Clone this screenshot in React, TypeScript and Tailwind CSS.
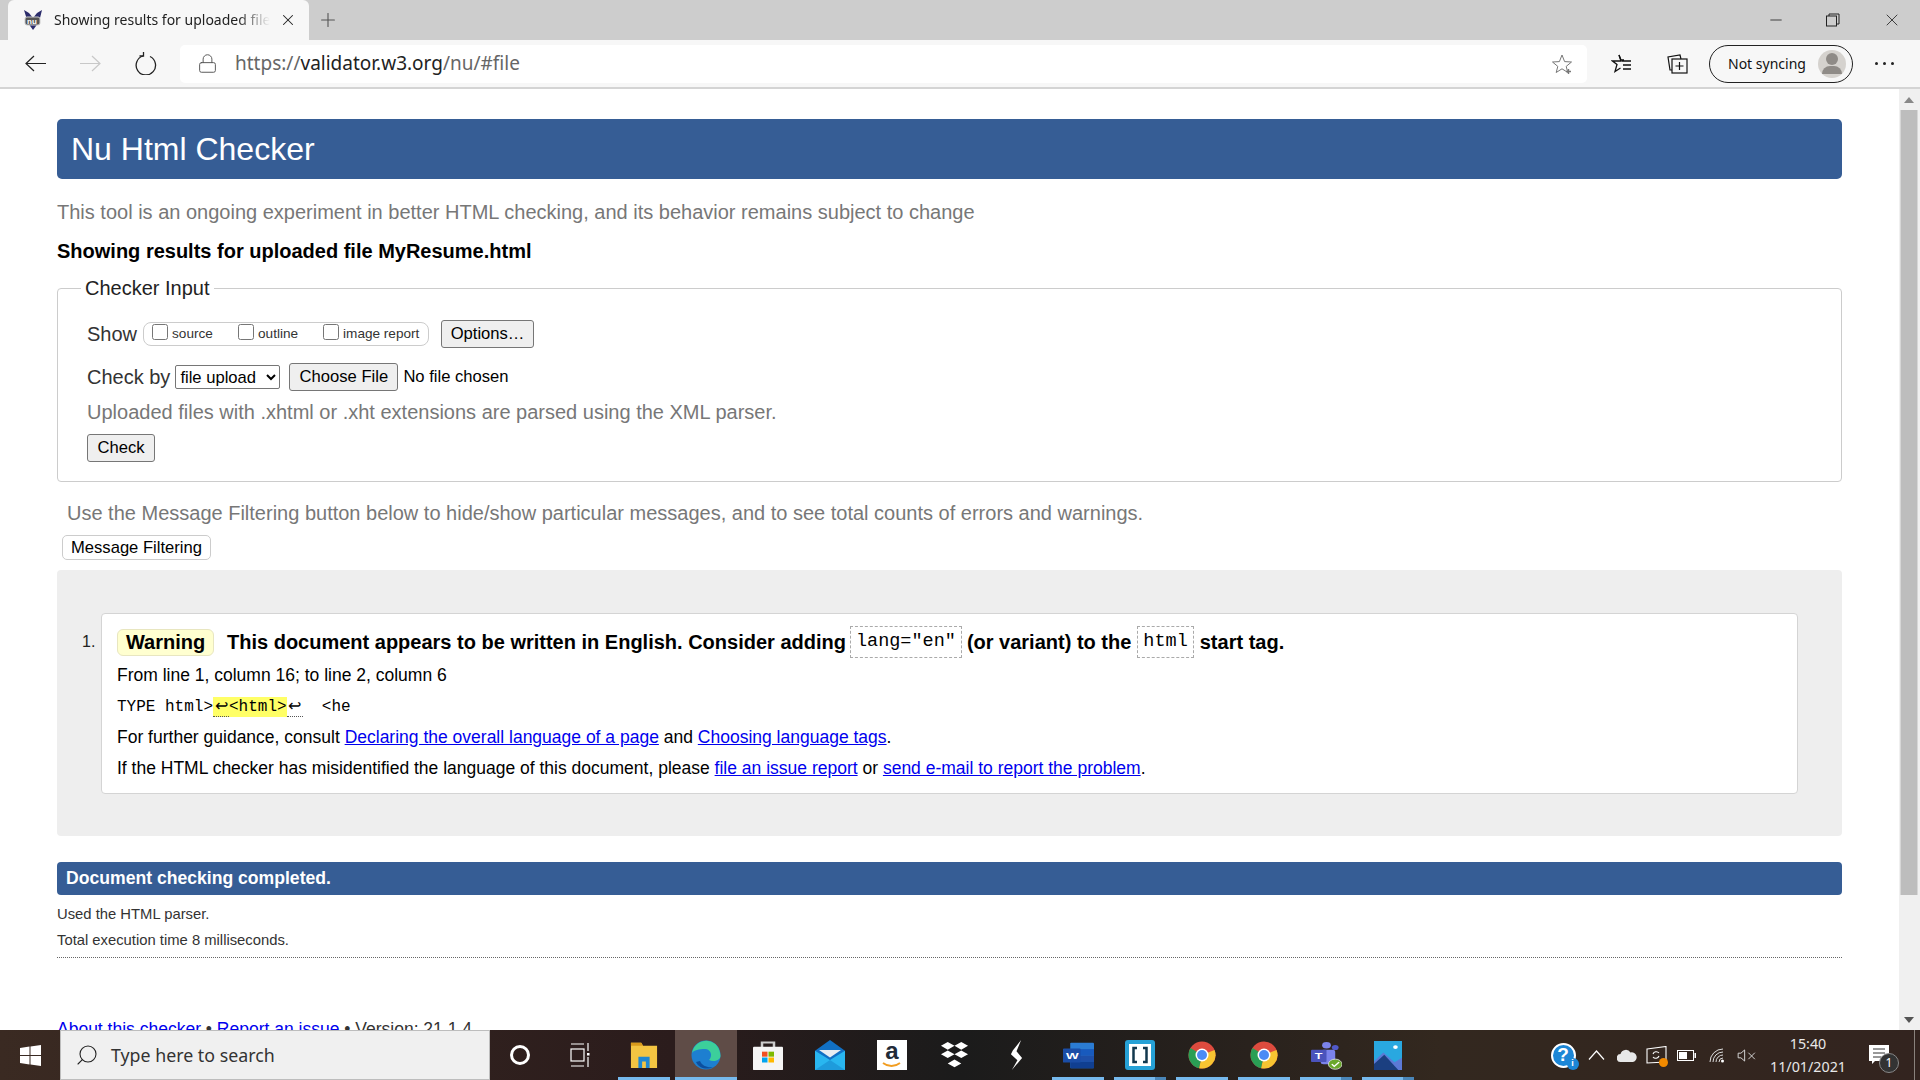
import React from 'react';
import { Lock, Plus, X, Minus, Search } from 'lucide-react';

const sans = "font-['Liberation_Sans',Arial,sans-serif]";
const ui = "font-['Noto_Sans','Open_Sans',sans-serif]";
const mono = "font-['Liberation_Mono',monospace]";
const btn = 'rounded-[3px] border border-[#767676] bg-[#efefef] text-black';
const link = 'text-[#0000ee] underline';

const NuLogo = () => (
  <svg width="22" height="22" viewBox="0 0 22 22">
    <path d="M2 1 L7 4 L11 9 L15 4 L20 1 L17 13 L11 21 L6 14 Z" fill="#2b2c6b" />
    <rect x="3" y="8" width="15" height="8" rx="2" fill="#555" stroke="#ccc" />
    <text x="5" y="15" fontSize="8" fontWeight="700" fill="#fff" fontFamily="Liberation Sans">nu</text>
  </svg>
);

const Tab = () => (
  <div className="flex h-10 items-center bg-[#cdcdcd] pl-[8px]">
    <div className="flex h-10 w-[301px] items-center rounded-t-[6px] bg-[#f7f7f7] pl-[14px]">
      <NuLogo />
      <span className={`ml-[10px] -mt-[2px] w-[216px] overflow-hidden whitespace-nowrap text-[14px] text-[#222] [mask-image:linear-gradient(to_right,black_85%,transparent)] ${ui}`}>
        Showing results for uploaded file MyResume.html
      </span>
      <X className="ml-[9px] text-[#222]" size={18} strokeWidth={1.4} />
    </div>
    <Plus className="ml-[8px] text-[#555]" size={22} strokeWidth={1.2} />
    <div className="flex-1" />
    <Minus className="mr-[41px] text-[#222]" size={18} strokeWidth={1.1} />
    <svg width="14" height="14" viewBox="0 0 14 14" fill="none" stroke="#222" className="mr-[42px]">
      <rect x="0.5" y="3" width="10" height="10" />
      <path d="M3 3 V1 H13 V11 H10.5" />
    </svg>
    <X className="mr-[18px] text-[#222]" size={20} strokeWidth={1} />
  </div>
);

const Toolbar = () => (
  <div className="flex h-[49px] items-center border-b-[2px] border-[#d4d4d4] bg-[#f7f7f7] pl-[8px]">
    <div className="flex w-[55px] justify-center">
      <svg width="21" height="17" viewBox="0 0 21 17" fill="none" stroke="#222" strokeWidth="1.2">
        <path d="M21 8.5 H1 M9 1 L1 8.5 L9 16" />
      </svg>
    </div>
    <div className="flex w-[55px] justify-center">
      <svg width="21" height="17" viewBox="0 0 21 17" fill="none" stroke="#c8c8c8" strokeWidth="1.2">
        <path d="M0 8.5 H20 M12 1 L20 8.5 L12 16" />
      </svg>
    </div>
    <div className="flex w-[55px] justify-center">
      <svg width="22" height="23" viewBox="0 0 22 23" fill="none" stroke="#222" strokeWidth="1.3">
        <path d="M8 4 A9.7 9.7 0 1 0 15 4.5" />
        <path d="M8.5 0 V4 H4.5" />
      </svg>
    </div>
    <div className="ml-[7px] flex h-[38px] w-[1407px] items-center rounded-[5px] bg-white">
      <Lock className="ml-[17px] text-[#555]" size={21} strokeWidth={1.1} />
      <span className={`ml-[17px] text-[19px] text-[#666] ${ui}`}>
        https://<span className="text-[#222]">validator.w3.org</span>/nu/#file
      </span>
      <div className="flex-1" />
      <svg width="22" height="22" viewBox="0 0 22 22" fill="none" stroke="#777" className="mr-[14px]">
        <path d="M11 2 L13.6 8.6 L20.5 9 L15.2 13.4 L16.8 19.5 L11 15.8 L5.2 19.5 L6.8 13.4 L1.5 9 L8.4 8.6 Z" />
        <path d="M17.5 16 V21 M15 18.5 H20" strokeWidth="1.4" />
      </svg>
    </div>
    <svg width="22" height="22" viewBox="0 0 22 22" fill="none" stroke="#111" className="ml-[24px]" strokeWidth="1.3">
      <path d="M8 2 L10 8 H1.5 L6 11.5 L4 18.5 L9.5 15" />
      <path d="M8 2 L10 7 H13 M11 8 H20 M12 12 H20 M12 16 H20" />
    </svg>
    <svg width="22" height="22" viewBox="0 0 22 22" fill="none" stroke="#111" className="ml-[33px]" strokeWidth="1.2">
      <rect x="6" y="6" width="15" height="14" />
      <path d="M6 17 H4 L2 4 L14 2 L15 6" />
      <path d="M13.5 9 V17 M9.5 13 H17.5" />
    </svg>
    <div className={`ml-[21px] flex h-[38px] w-[144px] items-center rounded-full border-[1.5px] border-[#222] pl-[18px] text-[14px] text-[#111] ${ui}`}>
      Not syncing
      <span className="ml-[12px] flex h-7 w-7 flex-col items-center justify-center rounded-full bg-[#d5d2ce]">
        <span className="h-[12px] w-[12px] rounded-full bg-[#8f8b87]" />
        <span className="mt-[1px] h-[8px] w-[20px] rounded-t-full bg-[#8f8b87]" />
      </span>
    </div>
    <div className="ml-[22px] flex gap-[5px]">
      <span className="h-[3px] w-[3px] rounded-full bg-[#222]" />
      <span className="h-[3px] w-[3px] rounded-full bg-[#222]" />
      <span className="h-[3px] w-[3px] rounded-full bg-[#222]" />
    </div>
  </div>
);

const Page = () => (
  <div className={`h-full flex-1 overflow-hidden pl-[57px] pr-[57px] pt-[30px] text-black ${sans}`}>
    <h1 className="flex h-[60px] items-center rounded-[5px] bg-[#365d95] pl-[14px] text-[32px] text-white">Nu Html Checker</h1>
    <p className="mt-[21px] text-[20px] leading-[24px] text-[#777]">
      This tool is an ongoing experiment in better HTML checking, and its behavior remains subject to change
    </p>
    <h2 className="mt-[15px] text-[20px] font-bold leading-[24px]">Showing results for uploaded file MyResume.html</h2>

    <div className="relative mt-[25px] h-[194px] rounded-[4px] border border-[#ccc] pl-[29px] pt-[31px]">
      <span className="absolute left-[23px] top-[-13px] bg-white px-[4px] text-[20px] leading-[24px] text-[#222]">Checker Input</span>
      <div className="flex h-[28px] items-center">
        <span className="text-[20px] text-[#333]">Show</span>
        <div className="ml-[6px] flex h-[24px] w-[286px] items-center rounded-[8px] border border-[#ccc] pl-[8px] text-[13.6px] text-[#333]">
          <input type="checkbox" className="-mt-[5px] h-[16px] w-[16px]" />
          <span className="ml-[4px] w-[66px]">source</span>
          <input type="checkbox" className="-mt-[5px] h-[16px] w-[16px]" />
          <span className="ml-[4px] w-[65px]">outline</span>
          <input type="checkbox" className="-mt-[5px] h-[16px] w-[16px]" />
          <span className="ml-[4px]">image report</span>
        </div>
        <button className={`ml-[12px] h-[28px] w-[93px] text-[16.6px] ${btn}`}>Options…</button>
      </div>
      <div className="mt-[15px] flex h-[28px] items-center">
        <span className="text-[20px] text-[#333]">Check by</span>
        <select className="ml-[5px] h-[24px] w-[105px] rounded-[2px] border border-[#767676] text-[16.6px]">
          <option>file upload</option>
        </select>
        <button className={`ml-[9px] h-[28px] w-[109px] text-[16.6px] ${btn}`}>Choose File</button>
        <span className="ml-[5px] text-[16.6px]">No file chosen</span>
      </div>
      <p className="mt-[9px] text-[20px] leading-[24px] text-[#777]">
        Uploaded files with .xhtml or .xht extensions are parsed using the XML parser.
      </p>
      <button className={`mt-[10px] block h-[28px] w-[68px] text-[16.6px] ${btn}`}>Check</button>
    </div>

    <p className="mt-[19px] pl-[10px] text-[20px] leading-[24px] text-[#777]">
      Use the Message Filtering button below to hide/show particular messages, and to see total counts of errors and warnings.
    </p>
    <div className="mt-[10px] pl-[5px]">
      <button className="h-[25px] w-[149px] rounded-[5px] border border-[#ccc] text-[16.6px]">Message Filtering</button>
    </div>

    <div className="mt-[10px] flex h-[266px] rounded-[4px] bg-[#eeeeee] pl-[25px] pr-[44px] pt-[43px]">
      <span className="mt-[20px] w-[19px] text-[16px] leading-[18px] text-[#222]">1.</span>
      <div className="h-[181px] flex-1 rounded-[4px] border border-[#d4d4d4] bg-white pl-[15px]">
        <div className="mt-[12px] flex h-[32px] items-center text-[20px] font-bold">
          <span className="flex h-[27px] w-[97px] items-center justify-center rounded-[6px] border border-[#e8e6c0] bg-[#ffffd0]">Warning</span>
          <span className="ml-[13px]">This document appears to be written in English. Consider adding</span>
          <code className={`ml-[4px] mr-[5px] flex h-[32px] items-center border border-dashed border-[#aaa] px-[5px] text-[18.5px] font-normal ${mono}`}>lang="en"</code>
          <span>(or variant) to the</span>
          <code className={`ml-[6px] mr-[6px] flex h-[32px] items-center border border-dashed border-[#aaa] px-[5px] text-[18.5px] font-normal ${mono}`}>html</code>
          <span>start tag.</span>
        </div>
        <p className="mt-[2px] text-[17.5px] leading-[31px]">From line 1, column 16; to line 2, column 6</p>
        <p className={`mt-[2px] whitespace-pre text-[16px] leading-[29px] ${mono}`}>
          TYPE html&gt;<span className="bg-[#ffff66] py-[1px]"><span className={`inline-block w-[16px] border-b border-dotted border-[#555] text-center leading-[20px] ${sans}`}>↩</span>&lt;html&gt;</span><span className={`inline-block w-[16px] border-b border-dotted border-[#555] text-center leading-[20px] ${sans}`}>↩</span>  &lt;he
        </p>
        <p className="text-[17.5px] leading-[31px]">
          For further guidance, consult <a className={link} href="#a">Declaring the overall language of a page</a> and <a className={link} href="#b">Choosing language tags</a>.
        </p>
        <p className="text-[17.5px] leading-[31px]">
          If the HTML checker has misidentified the language of this document, please <a className={link} href="#c">file an issue report</a> or <a className={link} href="#d">send e-mail to report the problem</a>.
        </p>
      </div>
    </div>

    <div className="mt-[26px] flex h-[33px] items-center rounded-[4px] bg-[#365d95] pl-[9px] text-[17.6px] font-bold text-white">Document checking completed.</div>
    <p className="mt-[6px] text-[14.8px] leading-[26px] text-[#333]">Used the HTML parser.</p>
    <p className="text-[14.8px] leading-[27px] text-[#333]">Total execution time 8 milliseconds.</p>
    <div className="mt-[3px] border-t border-dotted border-[#666]" />
    <p className="mt-[60px] text-[17.5px] leading-[22px] text-[#333]">
      <a className={link} href="#e">About this checker</a> • <a className={link} href="#f">Report an issue</a> • Version: 21.1.4
    </p>
  </div>
);

const Scrollbar = () => (
  <div className="flex w-[21px] flex-col items-center bg-[#f0f0f0]">
    <svg width="10" height="6" viewBox="0 0 10 6" className="mt-[8px] -translate-x-[1px]" fill="#888">
      <path d="M5 0 L10 6 H0 Z" />
    </svg>
    <div className="mt-[7px] h-[785px] w-[17px] -translate-x-[0.5px] bg-[#bdbdbd]" />
    <div className="flex-1" />
    <svg width="10" height="6" viewBox="0 0 10 6" className="mb-[7px] -translate-x-[1px]" fill="#555">
      <path d="M0 0 H10 L5 6 Z" />
    </svg>
  </div>
);

type Slot = { key: string; icon: React.ReactNode; bar?: 'full' | 'split' | 'active' };

const Chrome = () => (
  <svg width="28" height="28" viewBox="0 0 28 28">
    <circle cx="14" cy="14" r="13.5" fill="#dd4b3e" />
    <path d="M14 14 L26.5 9 A13.5 13.5 0 0 1 11 27.2 Z" fill="#f7c431" />
    <path d="M14 14 L11 27.2 A13.5 13.5 0 0 1 2.5 7 Z" fill="#2a9f55" />
    <circle cx="14" cy="14" r="6.5" fill="#fff" />
    <circle cx="14" cy="14" r="5" fill="#4c8bf5" />
  </svg>
);

const slots: Slot[] = [
  {
    key: 'explorer',
    bar: 'full',
    icon: (
      <svg width="28" height="28" viewBox="0 0 30 30">
        <path d="M1 2 H12 L14 5 H29 V29 H1 Z" fill="#f4c542" />
        <path d="M1 2 H12 L14 5 H1 Z" fill="#d99a1c" />
        <path d="M9 29 V17 H21 V29 H17 V22 H13 V29 Z" fill="#1e88d2" />
      </svg>
    ),
  },
  {
    key: 'edge',
    bar: 'active',
    icon: (
      <svg width="30" height="30" viewBox="0 0 30 30">
        <circle cx="15" cy="15" r="14.5" fill="#1d7fd0" />
        <path d="M1 13 C3 3 12 0 17 1 C25 2 29 8 29.5 16 C29 21 22 22 18 20 C22 16 20 9 14 9 C8 9 3 10 1 13 Z" fill="#3ccf9b" />
        <path d="M9 21 C11 26 17 28 22 27 C17 30 8 29 5 22 Z" fill="#0c4f9e" />
      </svg>
    ),
  },
  {
    key: 'store',
    icon: (
      <svg width="30" height="30" viewBox="0 0 30 36" preserveAspectRatio="none">
        <path d="M9 9 V3 H21 V9" fill="none" stroke="#ccc" strokeWidth="2.5" />
        <rect x="0" y="8" width="30" height="28" rx="1" fill="#f5f5f5" />
        <rect x="9" y="14" width="5.5" height="6" fill="#f25022" />
        <rect x="15.5" y="14" width="5.5" height="6" fill="#7fba00" />
        <rect x="9" y="21" width="5.5" height="6" fill="#00a4ef" />
        <rect x="15.5" y="21" width="5.5" height="6" fill="#ffb900" />
      </svg>
    ),
  },
  {
    key: 'mail',
    icon: (
      <svg width="30" height="30" viewBox="0 0 30 36" preserveAspectRatio="none">
        <path d="M0 13 L15 0 L30 13 V36 H0 Z" fill="#1170c4" />
        <path d="M4 12 H26 L15 21 Z" fill="#e8edf2" />
        <path d="M0 13 L15 24 L30 13 V36 H0 Z" fill="#29b6f0" />
        <path d="M0 36 L15 24 L30 36 Z" fill="#1e9bdc" />
      </svg>
    ),
  },
  {
    key: 'amazon',
    icon: (
      <div className="flex h-[30px] w-[30px] flex-col items-center bg-white">
        <span className={`text-[24px] font-bold leading-[22px] text-[#222b38] ${sans}`}>a</span>
        <svg width="20" height="6" viewBox="0 0 20 6" fill="none" stroke="#f29d20" strokeWidth="1.8">
          <path d="M1 1 C6 5 13 5 18 1" />
        </svg>
      </div>
    ),
  },
  {
    key: 'dropbox',
    icon: (
      <svg width="29" height="26" viewBox="0 0 30 34" fill="#fff" preserveAspectRatio="none">
        <path d="M8 0 L15 5 L8 10 L1 5 Z M22 0 L29 5 L22 10 L15 5 Z M8 11 L15 16 L8 21 L1 16 Z M22 11 L29 16 L22 21 L15 16 Z M15 23 L22 28 L15 33 L8 28 Z" />
      </svg>
    ),
  },
  {
    key: 'sublime',
    icon: (
      <svg width="13" height="30" viewBox="0 0 14 40" fill="#fff" preserveAspectRatio="none">
        <path d="M12 0 L3 14 L1 19 L8 27 L2 40 L13 24 L7 15 Z" />
      </svg>
    ),
  },
  {
    key: 'word',
    bar: 'full',
    icon: (
      <svg width="31" height="27" viewBox="0 0 30 38" preserveAspectRatio="none">
        <rect x="7" y="1" width="23" height="36" rx="1" fill="#2b7cd3" />
        <rect x="7" y="10" width="23" height="9" fill="#185abd" />
        <rect x="7" y="19" width="23" height="9" fill="#1e4fa8" />
        <rect x="7" y="28" width="23" height="9" fill="#103f91" />
        <rect x="0" y="9" width="17" height="20" rx="1" fill="#1a4da6" />
        <text x="3" y="24" fontSize="13" fontWeight="700" fill="#fff" fontFamily="Liberation Sans">W</text>
      </svg>
    ),
  },
  {
    key: 'brackets',
    bar: 'split',
    icon: (
      <svg width="30" height="30" viewBox="0 0 30 30">
        <rect x="0" y="0" width="30" height="30" rx="3" fill="#26a1d6" />
        <rect x="4" y="4" width="22" height="22" fill="#fff" />
        <path d="M12 8 H8.5 V22 H12 M18 8 H21.5 V22 H18" fill="none" stroke="#12384e" strokeWidth="2.5" />
      </svg>
    ),
  },
  { key: 'chrome1', bar: 'full', icon: <Chrome /> },
  { key: 'chrome2', bar: 'full', icon: <Chrome /> },
  {
    key: 'teams',
    bar: 'split',
    icon: (
      <svg width="31" height="29" viewBox="0 0 32 40" preserveAspectRatio="none">
        <circle cx="25" cy="9" r="3.5" fill="#5059c9" />
        <circle cx="16" cy="6" r="4.5" fill="#7b83eb" />
        <rect x="10" y="12" width="15" height="20" rx="3" fill="#7b83eb" />
        <rect x="0" y="12" width="16" height="17" rx="1" fill="#4b53bc" />
        <text x="4" y="25" fontSize="13" fontWeight="700" fill="#fff" fontFamily="Liberation Sans">T</text>
        <circle cx="25" cy="32" r="7" fill="#6aa82c" stroke="#ddd" />
        <path d="M21.5 32 L24 35 L29 29" fill="none" stroke="#fff" strokeWidth="1.6" />
      </svg>
    ),
  },
  {
    key: 'photos',
    bar: 'split',
    icon: (
      <svg width="28" height="29" viewBox="0 0 30 38" preserveAspectRatio="none">
        <rect width="30" height="38" fill="#29a8e0" />
        <circle cx="23" cy="8" r="2.5" fill="#fff" />
        <path d="M0 27 L10 15 L22 28 L30 22 V38 H0 Z" fill="#5c79d6" />
        <path d="M0 30 L11 18 L26 38 H0 Z" fill="#1b3f80" />
      </svg>
    ),
  },
];

const TaskbarSlot = ({ slot }: { slot: Slot }) => (
  <div className={`relative flex h-[50px] w-[62px] items-center justify-center ${slot.bar === 'active' ? 'bg-[#5f4c47]' : ''}`}>
    {slot.icon}
    {slot.bar && (
      <span className={`absolute bottom-0 flex h-[3px] ${slot.bar === 'active' ? 'inset-x-0' : 'inset-x-[5px]'} bg-[#76b9ed]`}>
        {slot.bar === 'split' && <span className="ml-auto h-[3px] w-[11px] bg-[#4a86b8]" />}
      </span>
    )}
  </div>
);

const Tray = () => (
  <>
    <div className="flex w-[34px] justify-center">
      <div className="relative flex h-[25px] w-[25px] items-center justify-center rounded-full border-[2px] border-white bg-[#1c86d6] text-[19px] font-bold text-white">
        <span className={sans}>?</span>
        <span className={`absolute -bottom-[4px] -right-[5px] flex h-[12px] w-[12px] items-center justify-center rounded-full bg-[#1c86d6] text-[9px] ${sans}`}>i</span>
      </div>
    </div>
    <div className="flex w-[32px] justify-center">
      <svg width="17" height="10" viewBox="0 0 17 10" fill="none" stroke="#fff" strokeWidth="1.2">
        <path d="M1 9.5 L8.5 1 L16 9.5" />
      </svg>
    </div>
    <div className="flex w-[30px] justify-center">
      <svg width="20" height="13" viewBox="0 0 20 13" fill="#e8e8e8">
        <path d="M4 13 A4 4 0 0 1 3.5 5 A5.5 5.5 0 0 1 13.5 3.5 A4.7 4.7 0 0 1 16 13 Z" />
      </svg>
    </div>
    <div className="flex w-[29px] justify-center">
      <div className="relative">
        <svg width="21" height="18" viewBox="0 0 21 18" fill="none" stroke="#fff" strokeWidth="1.1">
          <path d="M1 3 L20 0.5 V16 L1 17 Z" />
          <path d="M7 8 A3.5 3.5 0 0 1 13 7 M13 10 A3.5 3.5 0 0 1 7 11" />
        </svg>
        <span className="absolute -bottom-[3px] -right-[1px] h-[9px] w-[9px] rounded-full bg-[#f28a00]" />
      </div>
    </div>
    <div className="flex w-[31px] justify-center">
      <svg width="19" height="11" viewBox="0 0 19 11">
        <rect x="0.5" y="0.5" width="16" height="10" fill="none" stroke="#fff" />
        <rect x="2" y="2" width="8" height="7" fill="#fff" />
        <rect x="17.5" y="3" width="1.5" height="5" fill="#fff" />
      </svg>
    </div>
    <div className="flex w-[30px] justify-center">
      <svg width="16" height="16" viewBox="0 0 16 16" fill="none" stroke="#ddd">
        <path d="M1 15 A13 13 0 0 1 14 2 M4 15 A10 10 0 0 1 14 5 M7 15 A7 7 0 0 1 14 8 M10 15 A4 4 0 0 1 14 11" />
        <circle cx="13.5" cy="14" r="1.5" fill="#fff" stroke="none" />
      </svg>
    </div>
    <div className="flex w-[29px] justify-center">
      <svg width="19" height="13" viewBox="0 0 20 14" fill="none" stroke="#ddd">
        <path d="M1 4.5 H4 L8 1 V13 L4 9.5 H1 Z M12 4 L19 11 M19 4 L12 11" />
      </svg>
    </div>
    <div className={`ml-[9px] flex w-[76px] flex-col items-center text-[14.3px] leading-[23px] text-[#e8e8e8] ${ui}`}>
      <span>15:40</span>
      <span>11/01/2021</span>
    </div>
    <div className="relative ml-[23px]">
      <svg width="20" height="20" viewBox="0 0 20 20" fill="#fff">
        <path d="M0 0 H20 V16 H6 L3 19 V16 H0 Z" />
        <path d="M4 4 H16 M4 8 H16 M4 12 H12" stroke="#333" />
      </svg>
      <span className="absolute -bottom-[8px] -right-[10px] flex h-[20px] w-[20px] items-center justify-center rounded-full border border-[#888] bg-[#333] text-[12px] text-white">1</span>
    </div>
    <div className="ml-[25px] mr-[5px] h-[50px] w-px bg-[#8a827c]" />
  </>
);

const Taskbar = () => (
  <div className="flex h-[50px] items-center bg-[linear-gradient(to_right,#3a2a22_0%,#2b1c1c_35%,#1b1b1b_50%,#241f1c_60%,#33281f_75%,#33241f_100%)]">
    <div className="flex h-[50px] w-[60px] items-center justify-center">
      <svg width="21" height="21" viewBox="0 0 21 21" fill="#fff">
        <path d="M0 3 L9.5 1.6 V10 H0 Z M10.5 1.4 L21 0 V10 H10.5 Z M0 11 H9.5 V19.4 L0 18 Z M10.5 11 H21 V21 L10.5 19.6 Z" />
      </svg>
    </div>
    <div className={`flex h-[50px] w-[430px] items-center border-x border-y border-[#bdbdbd] bg-[#f0f0f0] pl-[14px] text-[17.8px] text-[#333] ${ui}`}>
      <Search className="-scale-x-100 text-[#222]" size={24} strokeWidth={1.1} />
      <span className="ml-[12px]">Type here to search</span>
    </div>
    <div className="flex h-[50px] w-[60px] items-center justify-center">
      <span className="h-[20px] w-[20px] rounded-full border-[3px] border-white" />
    </div>
    <div className="flex h-[50px] w-[60px] items-center justify-center">
      <svg width="20" height="26" viewBox="0 0 20 26" fill="none" stroke="#fff" strokeWidth="1.2">
        <path d="M1 2 H14 M1 24 H14 M18 1 V9 M18 15 V25" />
        <rect x="1" y="7" width="13" height="12" />
        <rect x="17" y="11" width="2.5" height="2.5" fill="#fff" stroke="none" />
      </svg>
    </div>
    <div className="ml-[3px] flex">
      {slots.map((slot) => (
        <TaskbarSlot key={slot.key} slot={slot} />
      ))}
    </div>
    <div className="flex-1" />
    <Tray />
  </div>
);

export default function App() {
  return (
    <div className="flex h-[1080px] w-[1920px] flex-col overflow-hidden bg-white">
      <Tab />
      <Toolbar />
      <div className="flex h-[941px] bg-white">
        <Page />
        <Scrollbar />
      </div>
      <Taskbar />
    </div>
  );
}
